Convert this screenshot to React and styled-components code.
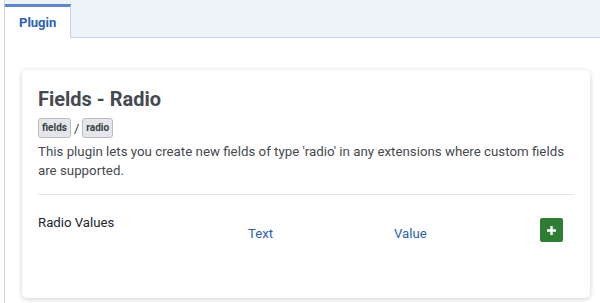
import styled, { createGlobalStyle } from "styled-components";

const GlobalStyle = createGlobalStyle`
  body {
    margin: 0;
    background: #fff;
    font-family: Roboto, "Liberation Sans", sans-serif;
  }
`;

const App = () => {
  return (
    <>
      <GlobalStyle />
      <Tabs>
        <TabList>
          <Tab $active>Plugin</Tab>
          <TabFill />
        </TabList>
        <Panel>
          <Card>
            <Title>Fields - Radio</Title>
            <Crumbs>
              <Badge>fields</Badge>
              <Slash>/</Slash>
              <Badge>radio</Badge>
            </Crumbs>
            <Description>
              This plugin lets you create new fields of type 'radio' in any
              extensions where custom fields are supported.
            </Description>
            <Divider />
            <FieldRow>
              <FieldLabel>Radio Values</FieldLabel>
              <HeadCell>Text</HeadCell>
              <HeadCell>Value</HeadCell>
              <ButtonCell>
                <AddButton type="button" aria-label="Add">
                  <svg width="11" height="11" viewBox="0 0 11 11">
                    <path
                      d="M5.5 1v9M1 5.5h9"
                      stroke="#fff"
                      strokeWidth="2.4"
                    />
                  </svg>
                </AddButton>
              </ButtonCell>
            </FieldRow>
          </Card>
        </Panel>
      </Tabs>
    </>
  );
};

export default App;

const Tabs = styled.div`
  margin-left: 4px;
  min-height: 303px;
  border-left: 1px solid #c7d3e5;
`;

const TabList = styled.div`
  display: flex;
  height: 38px;
  background: #eef2f9;
`;

const Tab = styled.div`
  box-sizing: border-box;
  width: 66px;
  margin-top: 4px;
  padding-top: 8px;
  padding-left: 14px;
  background: #fff;
  border-top: 3px solid #5f86c6;
  border-right: 1px solid #c7d3e5;
  color: #2a62b0;
  font-size: 13px;
  font-weight: 700;
`;

const TabFill = styled.div`
  flex: 1;
  border-bottom: 1px solid #c7d3e5;
`;

const Panel = styled.div`
  padding: 32px 10px 6px 17px;
`;

const Card = styled.div`
  background: #fff;
  border-radius: 5px;
  box-shadow: 0 1px 5px rgba(0, 0, 0, 0.2);
  padding: 16px 16px 52px 16px;
  min-height: 160px;
`;

const Title = styled.h2`
  margin: 0 0 6px;
  font-size: 20px;
  line-height: 26px;
  font-weight: 700;
  color: #454a50;
`;

const Crumbs = styled.div`
  display: flex;
  align-items: center;
  gap: 3px;
  margin-bottom: 4px;
`;

const Badge = styled.span`
  display: inline-block;
  padding: 3px 3px;
  font-size: 10px;
  line-height: 12px;
  font-weight: 700;
  color: #3a3e44;
  background: #e4e6e9;
  border: 1px solid #b9bec5;
  border-radius: 3px;
`;

const Slash = styled.span`
  font-size: 13px;
  color: #3a3e44;
`;

const Description = styled.p`
  margin: 0;
  font-size: 13.3px;
  line-height: 19px;
  color: #454a50;
`;

const Divider = styled.hr`
  margin: 14px 0 18px;
  border: 0;
  border-top: 1px solid #e2e4e7;
`;

const FieldRow = styled.div`
  display: grid;
  grid-template-columns: 210px 146px 146px 1fr;
  align-items: start;
`;

const FieldLabel = styled.div`
  font-size: 13.2px;
  line-height: 20px;
  color: #22262b;
`;

const HeadCell = styled.div`
  padding-top: 11px;
  font-size: 13.2px;
  line-height: 20px;
  color: #2a62b0;
`;

const ButtonCell = styled.div`
  padding-top: 5px;
`;

const AddButton = styled.button`
  display: flex;
  align-items: center;
  justify-content: center;
  width: 23px;
  height: 24px;
  padding: 0;
  border: 0;
  border-radius: 2px;
  background: #2f7d32;
  cursor: pointer;
`;
